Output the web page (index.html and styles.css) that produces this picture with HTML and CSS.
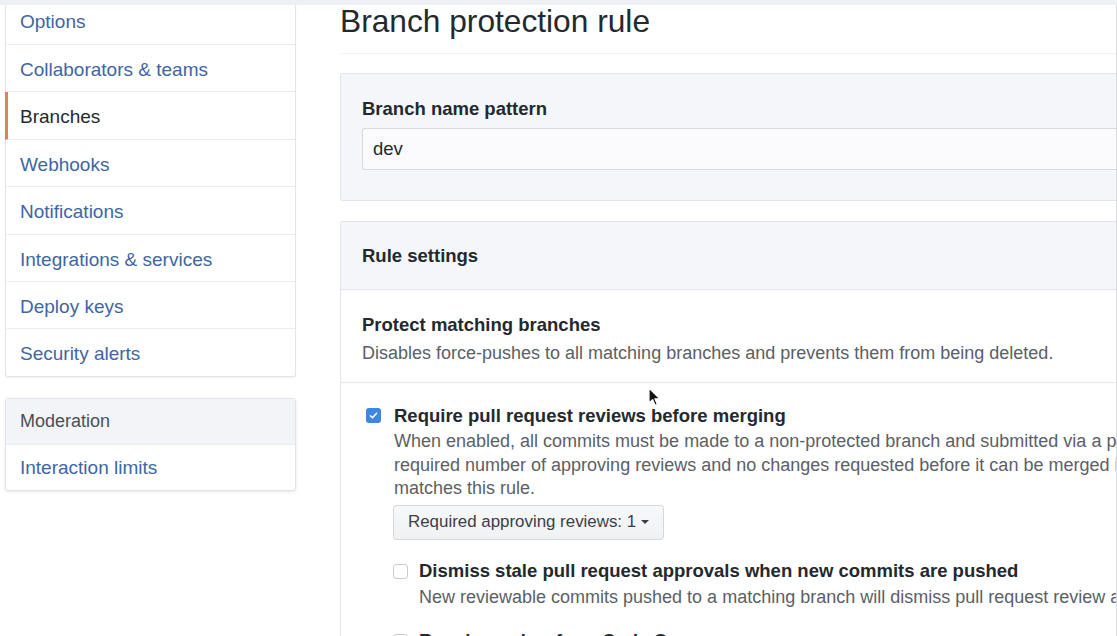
FILE: index.html
```html
<!DOCTYPE html>
<html lang="en">
<head>
<meta charset="utf-8">
<title>Branch protection rule</title>
<link rel="stylesheet" href="styles.css">
</head>
<body>
<div class="topstrip"></div>
<div class="layout">
  <aside class="sidebar">
    <nav class="menu">
      <a class="menu-item first">Options</a>
      <a class="menu-item">Collaborators &amp; teams</a>
      <a class="menu-item selected">Branches</a>
      <a class="menu-item">Webhooks</a>
      <a class="menu-item">Notifications</a>
      <a class="menu-item">Integrations &amp; services</a>
      <a class="menu-item">Deploy keys</a>
      <a class="menu-item last">Security alerts</a>
    </nav>
    <nav class="menu menu-mod">
      <div class="menu-heading">Moderation</div>
      <a class="menu-item last">Interaction limits</a>
    </nav>
  </aside>

  <main class="main">
    <h1 class="subhead">Branch protection rule</h1>

    <section class="box box-pattern">
      <label class="label">Branch name pattern</label>
      <div class="input">dev</div>
    </section>

    <section class="box box-rules">
      <div class="box-header">Rule settings</div>
      <div class="rule-intro">
        <div class="title">Protect matching branches</div>
        <div class="desc">Disables force-pushes to all matching branches and prevents them from being deleted.</div>
      </div>
      <div class="rule-list">
        <div class="check-row">
          <span class="checkbox checked">
            <svg viewBox="0 0 16 16" width="11" height="11"><path d="M3.5 8.3l3 3 6-6.6" fill="none" stroke="#fff" stroke-width="2.2" stroke-linecap="round" stroke-linejoin="round"/></svg>
          </span>
          <div class="check-body">
            <div class="title">Require pull request reviews before merging</div>
            <div class="desc lines">
              <span class="line">When enabled, all commits must be made to a non-protected branch and submitted via a pull request with the</span>
              <span class="line">required number of approving reviews and no changes requested before it can be merged into a branch that</span>
              <span class="line">matches this rule.</span>
            </div>
            <button class="select-btn">Required approving reviews: 1 <span class="caret"></span></button>

            <div class="check-row nested">
              <span class="checkbox"></span>
              <div class="check-body">
                <div class="title">Dismiss stale pull request approvals when new commits are pushed</div>
                <div class="desc lines">
                  <span class="line">New reviewable commits pushed to a matching branch will dismiss pull request review approvals.</span>
                </div>
              </div>
            </div>

            <div class="check-row nested next">
              <span class="checkbox"></span>
              <div class="check-body">
                <div class="title">Require review from Code Owners</div>
              </div>
            </div>
          </div>
        </div>
      </div>
    </section>
  </main>
</div>

<svg class="cursor" width="14" height="20" viewBox="0 0 14 20">
  <path d="M1 1 L1 16 L4.6 12.6 L7.2 18.4 L9.4 17.4 L6.9 11.8 L11.8 11.8 Z" fill="#111" stroke="#fff" stroke-width="1.2" stroke-linejoin="round"/>
</svg>
</body>
</html>
```

FILE: styles.css
```css
html, body {
  margin: 0;
  padding: 0;
  height: 636px;
  overflow: hidden;
  background: #ffffff;
}

body {
  font-family: "Liberation Sans", Arial, Helvetica, sans-serif;
  color: #24292e;
  position: relative;
}

/* thin grey bar cut off at the very top of the frame */
.topstrip {
  position: absolute;
  top: 0;
  left: 0;
  right: 0;
  height: 5px;
  background: #eff0f3;
  z-index: 2;
}

.layout {
  display: flex;
  align-items: flex-start;
  gap: 44px;
  padding-left: 5px;
}

/* ---------- Sidebar ---------- */
.sidebar {
  width: 291px;
  flex: none;
  display: flex;
  flex-direction: column;
  gap: 21px;
}

.menu {
  display: flex;
  flex-direction: column;
  border: 1px solid #e1e4e8;
  border-radius: 0 0 3px 3px;
  background: #fff;
  box-shadow: 0 1px 2px rgba(0, 0, 0, 0.06);
}

.sidebar > .menu:first-child {
  border-top: none;
}

.menu-item {
  display: block;
  padding: 12px 14px 8px 12px;
  line-height: 26.4px;
  font-size: 19px;
  color: #3e66a3;
  border-bottom: 1px solid #eaecef;
  border-left: 3px solid transparent;
  margin-left: -1px;
  white-space: nowrap;
}

.menu-item.first {
  padding-top: 9px;
  padding-bottom: 8.6px;
}

.menu-item.last {
  border-bottom: none;
}

.menu-item.selected {
  color: #24292e;
  border-left-color: #e0825f;
}

.menu-mod {
  border-radius: 3px;
  box-shadow: 0 1px 3px rgba(0, 0, 0, 0.1);
}

.menu-mod .menu-item {
  padding-top: 10px;
  padding-bottom: 9px;
}

.menu-heading {
  padding: 9px 14px 9px 14px;
  line-height: 27px;
  font-size: 18px;
  color: #4a4f55;
  background: #f3f4f7;
  border-bottom: 1px solid #eaecef;
}

/* ---------- Main ---------- */
.main {
  flex: 1;
  min-width: 0;
  overflow: hidden;
  border-right: 1px solid #d9dbde;
  height: 636px;
}

.subhead {
  margin: 0 0 19px 0;
  padding: 3px 0 14px 0;
  font-size: 31.7px;
  font-weight: 400;
  line-height: 36px;
  color: #24292e;
  border-bottom: 1px solid #f1f2f4;
  white-space: nowrap;
}

.box {
  border: 1px solid #e1e4e8;
  border-right: none;
  border-radius: 3px 0 0 3px;
  background: #fff;
}

.box-pattern {
  background: #f5f6f9;
  padding: 23px 0 30px 21px;
  margin-bottom: 20px;
}

.label {
  display: block;
  font-size: 18.5px;
  font-weight: 700;
  line-height: 24px;
  color: #24292e;
  margin-bottom: 7px;
}

.input {
  height: 40px;
  border: 1px solid #d7dade;
  border-right: none;
  border-radius: 3px 0 0 3px;
  background: #fbfbfd;
  font-size: 18.5px;
  line-height: 40px;
  padding-left: 10px;
  color: #24292e;
}

.box-header {
  background: #f5f6f9;
  height: 67px;
  line-height: 68px;
  padding-left: 21px;
  font-size: 18.5px;
  font-weight: 700;
  border-bottom: 1px solid #e1e4e8;
}

.title {
  font-size: 18.5px;
  font-weight: 700;
  line-height: 24px;
  color: #24292e;
  white-space: nowrap;
}

.desc {
  font-size: 18px;
  line-height: 23.5px;
  color: #5b6066;
}

.rule-intro {
  padding: 23px 0 17px 21px;
  border-bottom: 1px solid #e6e8eb;
}

.rule-intro .title {
  margin-bottom: 4px;
}

.rule-intro .desc {
  line-height: 24px;
  white-space: nowrap;
}

.rule-list {
  padding: 21px 0 0 25px;
}

.check-row {
  display: flex;
  align-items: flex-start;
  gap: 13px;
}

.check-body {
  min-width: 0;
}

.check-body > .title {
  margin-bottom: 2px;
}

.lines .line {
  display: block;
  white-space: nowrap;
}

.checkbox {
  flex: none;
  width: 13px;
  height: 13px;
  margin-top: 4.5px;
  border: 1px solid #c9ccd0;
  border-radius: 3px;
  background: #fff;
  display: flex;
  align-items: center;
  justify-content: center;
}

.checkbox.checked {
  width: 15px;
  height: 15px;
  margin-top: 3.5px;
  border: none;
  background: #3f86e2;
}

.select-btn {
  display: inline-flex;
  align-items: center;
  gap: 5px;
  margin-top: 4px;
  margin-left: -1px;
  height: 35px;
  padding: 0 14px 0 14px;
  border: 1px solid #d4d7db;
  border-radius: 3px;
  background: linear-gradient(#f7f8fa, #eff1f3);
  font-family: inherit;
  font-size: 16.9px;
  color: #3a3f45;
}

.caret {
  display: inline-block;
  width: 0;
  height: 0;
  border-left: 4px solid transparent;
  border-right: 4px solid transparent;
  border-top: 4px solid #3a3f45;
}

.check-row.nested {
  gap: 11px;
  margin-top: 19px;
  margin-left: -1px;
}

.check-row.nested .checkbox {
  margin-top: 5px;
}

.check-row.nested .check-body > .title {
  margin-bottom: 3px;
}

.check-row.next {
  margin-top: 20px;
}

/* ---------- Mouse pointer overlay ---------- */
.cursor {
  position: absolute;
  left: 648px;
  top: 387px;
  z-index: 3;
}
```
